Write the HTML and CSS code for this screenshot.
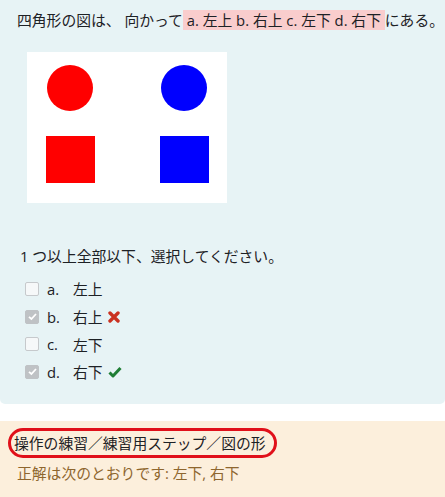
FILE: index.html
```html
<!DOCTYPE html>
<html lang="ja">

<head>
    <meta charset="UTF-8">
    <meta name="viewport" content="width=device-width, initial-scale=1.0">
    <title>図の形</title>
    <link rel="stylesheet" href="styles.css">
</head>

<body>
    <div class="formulation">
        <p class="qtext">四角形の図は、 向かって<span class="mark"> a. 左上 b. 右上 c. 左下 d. 右下 </span>にある。</p>

        <div class="figure">
            <svg width="200" height="151" viewBox="0 0 200 151">
                <rect width="200" height="151" fill="#fff"/>
                <circle cx="43" cy="36" r="23" fill="#f00"/>
                <circle cx="157" cy="36" r="23" fill="#00f"/>
                <rect x="19" y="84" width="49" height="47" fill="#f00"/>
                <rect x="133" y="84" width="49" height="47" fill="#00f"/>
            </svg>
        </div>

        <p class="prompt">1 つ以上全部以下、選択してください。</p>

        <div class="answer">
            <div class="option">
                <span class="box"></span>
                <span class="letter">a.</span>
                <span class="text">左上</span>
            </div>
            <div class="option">
                <span class="box checked">
                    <svg width="11" height="11" viewBox="0 0 11 11"><path d="M2 5.8 L4.4 8 L9 3" fill="none" stroke="#fff" stroke-width="1.8"/></svg>
                </span>
                <span class="letter">b.</span>
                <span class="text">右上</span>
                <svg class="mark-icon" width="12" height="12" viewBox="0 0 12 12">
                    <path d="M2 2 L10 10 M10 2 L2 10" stroke="#ca3120" stroke-width="3.4" stroke-linecap="round"/>
                </svg>
            </div>
            <div class="option">
                <span class="box"></span>
                <span class="letter">c.</span>
                <span class="text">左下</span>
            </div>
            <div class="option">
                <span class="box checked">
                    <svg width="11" height="11" viewBox="0 0 11 11"><path d="M2 5.8 L4.4 8 L9 3" fill="none" stroke="#fff" stroke-width="1.8"/></svg>
                </span>
                <span class="letter">d.</span>
                <span class="text">右下</span>
                <svg class="mark-icon" width="14" height="12" viewBox="0 0 14 12">
                    <path d="M1.5 6.5 L5 10 L12.5 2" fill="none" stroke="#1f7e35" stroke-width="3" stroke-linejoin="round"/>
                </svg>
            </div>
        </div>
    </div>

    <div class="feedback">
        <div class="crumbs">操作の練習／練習用ステップ／図の形</div>
        <div class="right">正解は次のとおりです: 左下, 右下</div>
    </div>
</body>

</html>
```

FILE: styles.css
```css
body {
    margin: 0;
    font-family: "Open Sans", "Noto Sans CJK JP", sans-serif;
    font-size: 14.8px;
    color: #1d2125;
}

.formulation {
    background-color: #e7f3f5;
    padding: 9px 4px 18px 17px;
    border-radius: 0 0 5px 5px;
}

.qtext {
    margin: 0;
    line-height: 22px;
    white-space: nowrap;
}

.mark {
    background-color: #f9cdcd;
}

.figure {
    margin: 21px 0 0 10px;
    line-height: 0;
}

.prompt {
    margin: 42px 0 0 3px;
    line-height: 22px;
}

.answer {
    margin: 8px 0 0 8px;
}

.option {
    display: flex;
    align-items: center;
    height: 27.7px;
}

.box {
    width: 12px;
    height: 12px;
    border: 1px solid #c6c9cc;
    border-radius: 2px;
    background-color: #f6f8f9;
    display: flex;
    align-items: center;
    justify-content: center;
}

.box.checked {
    background-color: #bfc2c5;
    border-color: #bfc2c5;
}

.letter {
    margin-left: 8px;
    width: 26px;
}

.mark-icon {
    margin-left: 5px;
}

.feedback {
    margin-top: 17px;
    background-color: #fcefdc;
    padding: 7px 17px 20px 17px;
    min-height: 60px;
}

.crumbs {
    display: inline-block;
    border: 3px solid #e0101a;
    border-radius: 15px;
    padding: 1px 8px 1px 3px;
    margin-left: -9px;
    line-height: 22px;
}

.right {
    margin-top: 4px;
    color: #8e662e;
    line-height: 22px;
}
```
